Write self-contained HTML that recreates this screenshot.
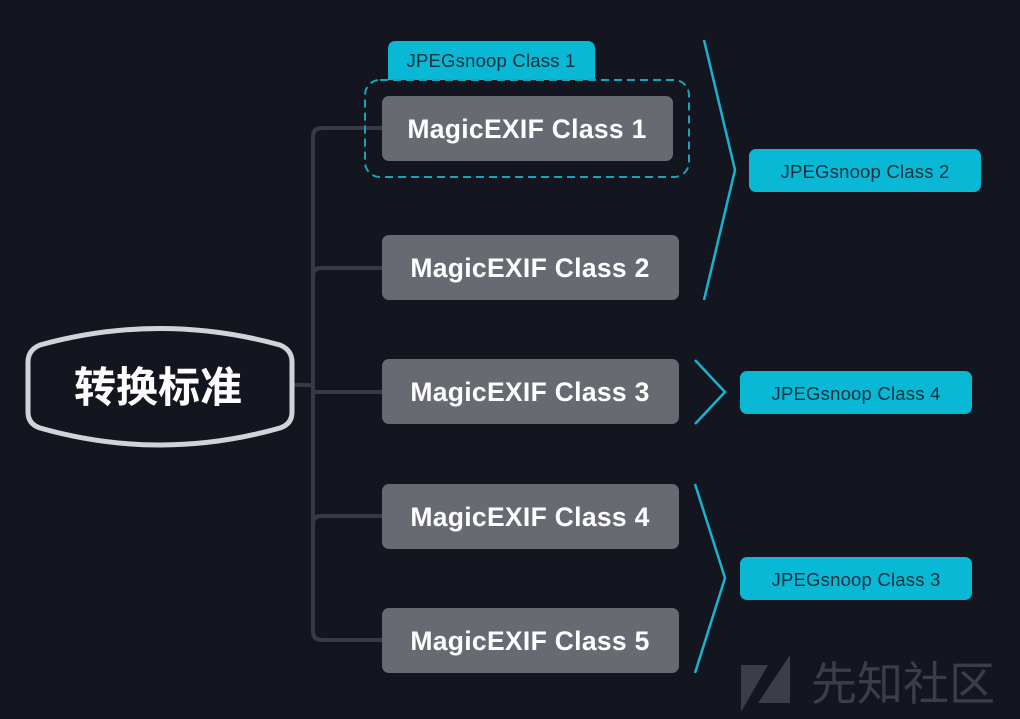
<!DOCTYPE html>
<html><head><meta charset="utf-8"><style>
html,body{margin:0;padding:0;background:#14161f;}
svg{display:block}
.b{font-family:"Liberation Sans","Noto Sans CJK SC",sans-serif;font-weight:bold;font-size:26.5px;fill:#fff;text-anchor:middle;letter-spacing:0.3px}
.c{font-family:"Liberation Sans",sans-serif;font-size:18.5px;fill:#123040;text-anchor:middle;letter-spacing:0.2px}
</style></head><body>
<svg width="1020" height="719" viewBox="0 0 1020 719" xmlns="http://www.w3.org/2000/svg">
<rect width="1020" height="719" fill="#14161f"/>
<g fill="none" stroke="#383a43" stroke-width="4">
<path d="M382 128 H322 Q313 128 313 137 V631 Q313 640 322 640 H382"/>
<path d="M313 276 Q313 268 321 268 H382"/>
<path d="M313 524 Q313 516 321 516 H382"/>
<path d="M293 385 H313 M313 392 H382"/>
</g>
<path d="M40 345 Q160 312 280 345 Q292 350 292 362 V412 Q292 424 280 428 Q160 462 40 428 Q28 424 28 412 V362 Q28 350 40 345 Z" fill="#14161f" stroke="#d2d3d8" stroke-width="5"/>
<text x="158" y="402" font-family="'Noto Sans CJK SC',sans-serif" font-weight="bold" font-size="42" fill="#fff" text-anchor="middle">转换标准</text>
<path d="M388 80 V49 Q388 41 396 41 H587 Q595 41 595 49 V80 Z" fill="#08b8d4"/>
<text class="c" x="491" y="67">JPEGsnoop Class 1</text>
<rect x="365" y="80" width="324" height="97" rx="15" fill="none" stroke="#1aa3bd" stroke-width="2" stroke-dasharray="8 5"/>
<g fill="#686a72">
<rect x="382" y="96" width="291" height="65" rx="7"/>
<rect x="382" y="235" width="297" height="65" rx="7"/>
<rect x="382" y="359" width="297" height="65" rx="7"/>
<rect x="382" y="484" width="297" height="65" rx="7"/>
<rect x="382" y="608" width="297" height="65" rx="7"/>
</g>
<text class="b" x="527" y="138">MagicEXIF Class 1</text>
<text class="b" x="530" y="277">MagicEXIF Class 2</text>
<text class="b" x="530" y="401">MagicEXIF Class 3</text>
<text class="b" x="530" y="526">MagicEXIF Class 4</text>
<text class="b" x="530" y="650">MagicEXIF Class 5</text>
<g fill="none" stroke="#18b3cf" stroke-width="2.5">
<path d="M704 40 L735 170 L704 300"/>
<path d="M695 360 L725 392 L695 424"/>
<path d="M695 484 L725 578 L695 673"/>
</g>
<g fill="#08b8d4">
<rect x="749" y="149" width="232" height="43" rx="7"/>
<rect x="740" y="371" width="232" height="43" rx="7"/>
<rect x="740" y="557" width="232" height="43" rx="7"/>
</g>
<text class="c" x="865" y="178">JPEGsnoop Class 2</text>
<text class="c" x="856" y="400">JPEGsnoop Class 4</text>
<text class="c" x="856" y="586">JPEGsnoop Class 3</text>
<g fill="#3b3d47">
<path d="M741 665 H768 L741 712 Z"/>
<path d="M790 655 V703 H758 Z"/>
</g>
<text x="903" y="700" font-family="'Noto Sans CJK SC',sans-serif" font-size="46" fill="#3b3d47" text-anchor="middle">先知社区</text>
</svg>
</body></html>
